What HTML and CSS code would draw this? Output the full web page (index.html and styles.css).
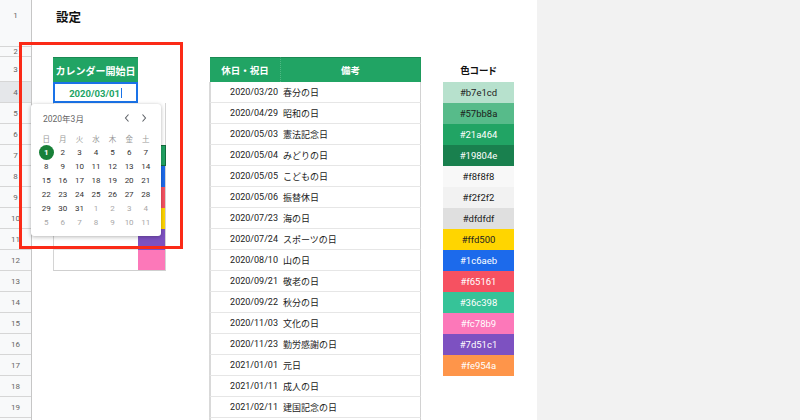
FILE: index.html
```html
<!DOCTYPE html>
<html lang="ja">
<head>
<meta charset="utf-8">
<title>設定</title>
<link rel="stylesheet" href="styles.css">
</head>
<body>
<div class="app">
  <div class="rowheads">
    <div class="rh r1">1</div>
    <div class="rh r2">2</div>
    <div class="rh r3">3</div>
    <div class="rh sel">4</div>
    <div class="rh">5</div>
    <div class="rh">6</div>
    <div class="rh">7</div>
    <div class="rh">8</div>
    <div class="rh">9</div>
    <div class="rh">10</div>
    <div class="rh">11</div>
    <div class="rh">12</div>
    <div class="rh">13</div>
    <div class="rh">14</div>
    <div class="rh">15</div>
    <div class="rh">16</div>
    <div class="rh">17</div>
    <div class="rh">18</div>
    <div class="rh">19</div>
    <div class="rh"></div>
  </div>

  <div class="sheet">
    <div class="title">設定</div>

    <div class="cal-table">
      <div class="ct-head">カレンダー開始日</div><div class="ct-blank"></div>
      <div class="ct-value">2020/03/01<span class="caret"></span></div><div class="ct-blank"></div>
      <div class="ct-cell"></div><div class="ct-sw"></div>
      <div class="ct-cell"></div><div class="ct-sw"></div>
      <div class="ct-cell"></div><div class="ct-sw sw-green"></div>
      <div class="ct-cell"></div><div class="ct-sw sw-blue"></div>
      <div class="ct-cell"></div><div class="ct-sw sw-red"></div>
      <div class="ct-cell"></div><div class="ct-sw sw-yellow"></div>
      <div class="ct-cell"></div><div class="ct-sw sw-purple"></div>
      <div class="ct-cell last"></div><div class="ct-sw sw-pink last"></div>
    </div>

    <div class="holidays">
      <div class="hd hd-date">休日・祝日</div><div class="hd hd-note">備考</div>
      <div class="hdate">2020/03/20</div><div class="hname">春分の日</div>
      <div class="hdate">2020/04/29</div><div class="hname">昭和の日</div>
      <div class="hdate">2020/05/03</div><div class="hname">憲法記念日</div>
      <div class="hdate">2020/05/04</div><div class="hname">みどりの日</div>
      <div class="hdate">2020/05/05</div><div class="hname">こどもの日</div>
      <div class="hdate">2020/05/06</div><div class="hname">振替休日</div>
      <div class="hdate">2020/07/23</div><div class="hname">海の日</div>
      <div class="hdate">2020/07/24</div><div class="hname">スポーツの日</div>
      <div class="hdate">2020/08/10</div><div class="hname">山の日</div>
      <div class="hdate">2020/09/21</div><div class="hname">敬老の日</div>
      <div class="hdate">2020/09/22</div><div class="hname">秋分の日</div>
      <div class="hdate">2020/11/03</div><div class="hname">文化の日</div>
      <div class="hdate">2020/11/23</div><div class="hname">勤労感謝の日</div>
      <div class="hdate">2021/01/01</div><div class="hname">元日</div>
      <div class="hdate">2021/01/11</div><div class="hname">成人の日</div>
      <div class="hdate">2021/02/11</div><div class="hname">建国記念の日</div>
      <div class="hdate"></div><div class="hname"></div>
    </div>

    <div class="colors">
      <div class="co-head">色コード</div>
      <div class="co c-b7e1cd">#b7e1cd</div>
      <div class="co c-57bb8a">#57bb8a</div>
      <div class="co c-21a464">#21a464</div>
      <div class="co c-19804e">#19804e</div>
      <div class="co c-f8f8f8">#f8f8f8</div>
      <div class="co c-f2f2f2">#f2f2f2</div>
      <div class="co c-dfdfdf">#dfdfdf</div>
      <div class="co c-ffd500">#ffd500</div>
      <div class="co c-1c6aeb">#1c6aeb</div>
      <div class="co c-f65161">#f65161</div>
      <div class="co c-36c398">#36c398</div>
      <div class="co c-fc78b9">#fc78b9</div>
      <div class="co c-7d51c1">#7d51c1</div>
      <div class="co c-fe954a">#fe954a</div>
    </div>
  </div>

  <div class="side"></div>

  <div class="highlight"></div>

  <div class="picker">
    <div class="pk-head">
      <span class="pk-title">2020年3月</span>
      <span class="pk-nav">
        <svg class="chev" viewBox="0 0 8 10" width="8" height="10"><path d="M5.5 1.5 L2.5 5 L5.5 8.5"/></svg>
        <svg class="chev" viewBox="0 0 8 10" width="8" height="10"><path d="M2.5 1.5 L5.5 5 L2.5 8.5"/></svg>
      </span>
    </div>
    <div class="pk-grid">
      <span class="dow">日</span><span class="dow">月</span><span class="dow">火</span><span class="dow">水</span><span class="dow">木</span><span class="dow">金</span><span class="dow">土</span>
      <span class="d"><span class="today">1</span></span><span class="d">2</span><span class="d">3</span><span class="d">4</span><span class="d">5</span><span class="d">6</span><span class="d">7</span>
      <span class="d">8</span><span class="d">9</span><span class="d">10</span><span class="d">11</span><span class="d">12</span><span class="d">13</span><span class="d">14</span>
      <span class="d">15</span><span class="d">16</span><span class="d">17</span><span class="d">18</span><span class="d">19</span><span class="d">20</span><span class="d">21</span>
      <span class="d">22</span><span class="d">23</span><span class="d">24</span><span class="d">25</span><span class="d">26</span><span class="d">27</span><span class="d">28</span>
      <span class="d">29</span><span class="d">30</span><span class="d">31</span><span class="d out">1</span><span class="d out">2</span><span class="d out">3</span><span class="d out">4</span>
      <span class="d out">5</span><span class="d out">6</span><span class="d out">7</span><span class="d out">8</span><span class="d out">9</span><span class="d out">10</span><span class="d out">11</span>
    </div>
  </div>
</div>
</body>
</html>
```

FILE: styles.css
```css
* { box-sizing: border-box; }

html, body {
  margin: 0;
  padding: 0;
  background: #ffffff;
}

body {
  width: 800px;
  height: 420px;
  overflow: hidden;
  font-family: Roboto, "Noto Sans CJK JP", sans-serif;
  font-size: 9px;
  color: #222222;
}

.app {
  position: relative;
  display: flex;
  width: 800px;
  height: 420px;
  overflow: hidden;
}

/* ---------- row headers ---------- */
.rowheads {
  width: 32px;
  flex: none;
  display: flex;
  flex-direction: column;
  background: #f8f9fa;
  border-right: 1px solid #c6c6c6;
}

.rh {
  flex: none;
  height: 21px;
  display: flex;
  align-items: center;
  justify-content: center;
  border-bottom: 1px solid #d6d6d6;
  font-size: 8px;
  color: #666666;
}

.rh.r1 {
  height: 47px;
  align-items: flex-start;
  padding-top: 11px;
}

.rh.r2 { height: 10px; font-size: 7.5px; }
.rh.r3 { height: 25px; }
.rh.sel { background: #e5e7ea; }

/* ---------- sheet grid ---------- */
.sheet {
  flex: none;
  display: grid;
  grid-template-columns: 21px 85px 28px 43px 72px 140px 22px 71px 23px;
  grid-template-rows: 47px 10px 25px repeat(17, 21px);
  width: 505px;
}

.title {
  grid-column: 2 / 5;
  grid-row: 1;
  padding: 7px 0 0 3px;
  font-size: 12.5px;
  font-weight: 700;
  color: #111111;
}

/* ---------- calendar start table ---------- */
.cal-table {
  grid-column: 2 / 4;
  grid-row: 3 / 13;
  display: grid;
  grid-template-columns: 85px 28px;
  grid-template-rows: 25px repeat(9, 21px);
}

.ct-head {
  background: #21a464;
  color: #ffffff;
  font-weight: 700;
  font-size: 10px;
  display: flex;
  align-items: center;
  justify-content: center;
  border-top: 1px solid #1b8a53;
}

.ct-value {
  border: 2px solid #1a73e8;
  display: flex;
  align-items: center;
  justify-content: center;
  color: #21a464;
  font-weight: 700;
  font-size: 9.5px;
  padding-top: 1px;
}

.caret {
  display: inline-block;
  width: 1px;
  height: 10px;
  margin-left: 1px;
  background: #1a73e8;
}

.ct-cell {
  border-left: 1px solid #d4d4d4;
  border-bottom: 1px solid #e4e4e4;
}

.ct-cell.last { border-bottom: 1px solid #cfcfcf; }

.ct-sw {
  border-right: 1px solid #d4d4d4;
}

.ct-sw.last { border-bottom: 1px solid #cfcfcf; }

.sw-green  { background: #21a464; border: 1px solid #146c3d; }
.sw-blue   { background: #1c6aeb; }
.sw-red    { background: #f65161; }
.sw-yellow { background: #ffd500; }
.sw-purple { background: #7d51c1; }
.sw-pink   { background: #fc78b9; }

/* ---------- holidays table ---------- */
.holidays {
  grid-column: 5 / 7;
  grid-row: 3 / 21;
  display: grid;
  grid-template-columns: 72px 140px;
  grid-template-rows: 25px repeat(17, 21px);
}

.hd {
  background: #21a464;
  color: #ffffff;
  font-weight: 700;
  font-size: 9.5px;
  display: flex;
  align-items: center;
  justify-content: center;
  border-top: 1px solid #1b8a53;
}

.hd-date {
  margin-left: 1px;
  border-right: 1px dotted #4fb883;
}

.hd-note {
  border-right: 1px solid #1d9a5c;
}

.hdate {
  border-left: 2px solid #d9d9d9;
  border-bottom: 1px solid #e6e6e6;
  display: flex;
  align-items: center;
  justify-content: flex-end;
  padding-right: 3px;
  color: #222222;
}

.hname {
  border-right: 1px solid #d2d2d2;
  border-bottom: 1px solid #e6e6e6;
  display: flex;
  align-items: center;
  padding-left: 2px;
  color: #222222;
}

/* ---------- colour code table ---------- */
.colors {
  grid-column: 8;
  grid-row: 3 / 18;
  display: grid;
  grid-template-rows: 25px repeat(14, 21px);
}

.co-head {
  display: flex;
  align-items: center;
  justify-content: center;
  font-weight: 700;
  font-size: 9.5px;
  font-feature-settings: "palt";
  color: #111111;
}

.co {
  display: flex;
  align-items: center;
  justify-content: center;
  font-size: 9.5px;
  color: #ffffff;
}

.c-b7e1cd { background: #b7e1cd; color: #222222; }
.c-57bb8a { background: #57bb8a; color: #1b1b1b; }
.c-21a464 { background: #21a464; }
.c-19804e { background: #19804e; }
.c-f8f8f8 { background: #f8f8f8; color: #222222; }
.c-f2f2f2 { background: #f2f2f2; color: #222222; }
.c-dfdfdf { background: #dfdfdf; color: #222222; }
.c-ffd500 { background: #ffd500; color: #222222; }
.c-1c6aeb { background: #1c6aeb; }
.c-f65161 { background: #f65161; }
.c-36c398 { background: #36c398; }
.c-fc78b9 { background: #fc78b9; }
.c-7d51c1 { background: #7d51c1; }
.c-fe954a { background: #fe954a; }

/* ---------- right grey area ---------- */
.side {
  flex: 1;
  background: #f2f2f2;
}

/* ---------- overlays ---------- */
.highlight {
  position: absolute;
  left: 19px;
  top: 42px;
  width: 164px;
  height: 207px;
  border: 3px solid #fb2a17;
  pointer-events: none;
}

.picker {
  position: absolute;
  left: 31px;
  top: 104px;
  width: 130px;
  height: 132px;
  background: #ffffff;
  border-radius: 3px;
  box-shadow: 0 1px 4px rgba(0, 0, 0, 0.28), 0 0 1px rgba(0, 0, 0, 0.12);
  padding: 7px 7px 6px 7px;
}

.pk-head {
  height: 14px;
  display: flex;
  align-items: center;
  justify-content: space-between;
  margin-bottom: 6px;
}

.pk-title {
  padding-left: 5px;
  font-size: 8.5px;
  color: #666666;
}

.pk-nav {
  display: flex;
  gap: 9px;
  padding-right: 6px;
}

.chev {
  display: block;
}

.chev path {
  fill: none;
  stroke: #5f6368;
  stroke-width: 1.1;
}

.pk-grid {
  display: grid;
  grid-template-columns: repeat(7, 1fr);
  grid-auto-rows: 14px;
}

.dow, .d {
  display: flex;
  align-items: center;
  justify-content: center;
  font-size: 8px;
}

.dow {
  color: #999999;
  font-size: 7.5px;
}

.d { color: #333333; }
.d.out { color: #a8a8a8; }

.today {
  width: 15px;
  height: 15px;
  border-radius: 50%;
  background: #188038;
  color: #ffffff;
  font-weight: 700;
  display: flex;
  align-items: center;
  justify-content: center;
}
```
